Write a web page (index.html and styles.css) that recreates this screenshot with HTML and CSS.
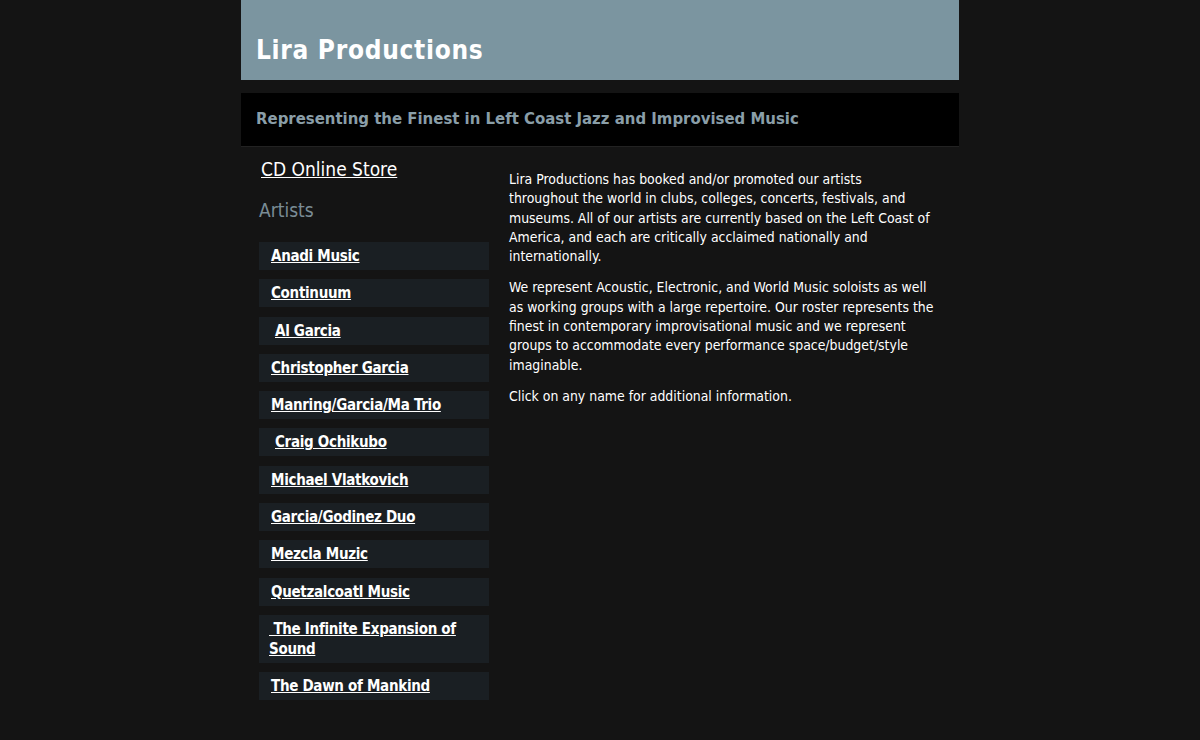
FILE: index.html
```html
<!DOCTYPE html>
<html>
<head>
<meta charset="utf-8">
<link rel="stylesheet" href="styles.css">
</head>
<body>
<div class="page">
  <header class="masthead"><h1>Lira Productions</h1></header>
  <div class="tagline"><h2>Representing the Finest in Left Coast Jazz and Improvised Music</h2></div>
  <div class="content">
    <nav class="sidebar">
      <a class="store" href="#">CD Online Store</a>
      <h3 class="artists">Artists</h3>
      <ul class="artist-list">
        <li><a href="#">Anadi Music</a></li>
        <li><a href="#">Continuum</a></li>
        <li class="indent"><a href="#">Al Garcia</a></li>
        <li><a href="#">Christopher Garcia</a></li>
        <li><a href="#">Manring/Garcia/Ma Trio</a></li>
        <li class="indent"><a href="#">Craig Ochikubo</a></li>
        <li><a href="#">Michael Vlatkovich</a></li>
        <li><a href="#">Garcia/Godinez Duo</a></li>
        <li><a href="#">Mezcla Muzic</a></li>
        <li><a href="#">Quetzalcoatl Music</a></li>
        <li class="wrap"><a href="#">&nbsp;The Infinite Expansion of Sound</a></li>
        <li><a href="#">The Dawn of Mankind</a></li>
      </ul>
    </nav>
    <main class="main">
      <p>Lira Productions has booked and/or promoted our artists throughout the world in clubs, colleges, concerts, festivals, and museums. All of our artists are currently based on the Left Coast of America, and each are critically acclaimed nationally and internationally.</p>
      <p>We represent Acoustic, Electronic, and World Music soloists as well as working groups with a large repertoire. Our roster represents the finest in contemporary improvisational music and we represent groups to accommodate every performance space/budget/style imaginable.</p>
      <p>Click on any name for additional information.</p>
    </main>
  </div>
</div>
</body>
</html>
```
FILE: styles.css
```css
html, body {
  margin: 0;
  padding: 0;
  background: #141414;
}
body {
  font-family: "DejaVu Sans Condensed", "DejaVu Sans", sans-serif;
  color: #ffffff;
}
.page {
  width: 718px;
  margin: 0 auto;
}
.masthead {
  background: #7b95a0;
  height: 80px;
  display: flex;
  align-items: flex-end;
  box-sizing: border-box;
  padding: 0 15px 14px;
}
.masthead h1 {
  margin: 0;
  font-size: 26px;
  font-weight: bold;
  letter-spacing: 0.7px;
  color: #ffffff;
  line-height: 32px;
}
.tagline {
  margin-top: 13px;
  background: #000000;
  height: 54px;
  box-sizing: border-box;
  border-bottom: 1px solid #222;
  display: flex;
  align-items: center;
  padding: 0 15px 2px;
}
.tagline h2 {
  margin: 0;
  font-size: 16.6px;
  font-weight: bold;
  color: #8a9ea8;
}
.content {
  display: flex;
  padding: 0 18px 0 18px;
}
.sidebar {
  width: 230px;
  flex: none;
  padding-top: 10px;
}
.store {
  display: block;
  margin-left: 2px;
  font-size: 19px;
  color: #ffffff;
  line-height: 24px;
}
.artists {
  margin: 17px 0 0;
  font-size: 19px;
  font-weight: normal;
  color: #7a8c96;
  line-height: 24px;
}
.artist-list {
  list-style: none;
  margin: 20px 0 0;
  padding: 0;
  display: flex;
  flex-direction: column;
  gap: 9.3px;
}
.artist-list li {
  background: #1a1f23;
  padding: 4px 10px 4px 12px;
  font-size: 15px;
  font-weight: bold;
  letter-spacing: -0.3px;
  line-height: 20px;
}
.artist-list li.indent {
  padding-left: 16px;
}
.artist-list li.wrap {
  padding-left: 10px;
}
.artist-list a {
  color: #ffffff;
}
.main {
  flex: 1;
  padding: 23px 7px 0 20px;
  font-size: 13.9px;
  line-height: 19.3px;
}
.main p {
  margin: 0 0 12px;
}
```
